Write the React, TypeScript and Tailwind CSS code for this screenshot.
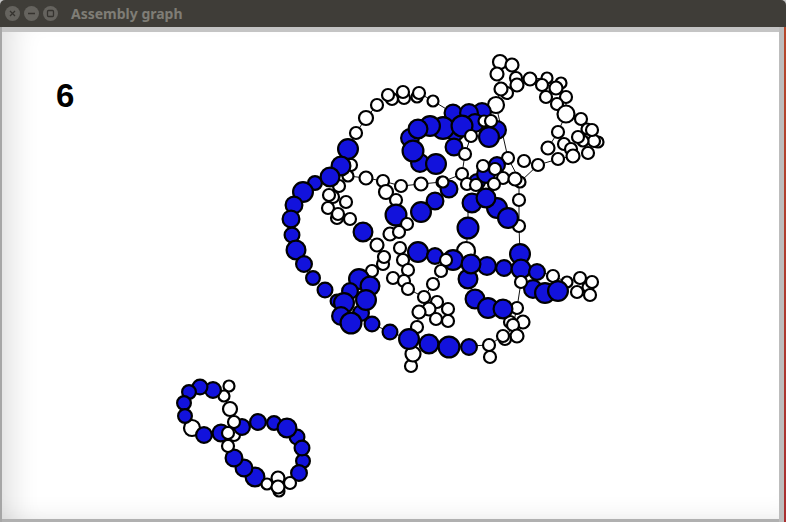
type N = [number, number, number];

const under: N[] = [
  [500,62,6.5],[512,65,6],[497,74,6],[516,78,5.5],[517,85,6],[530,79,6],[547,78,5],[542,85,5.5],[561,83,5],[556,88,6],
  [507,93,5.5],[501,89,6],[546,97,5.5],[566,97,5.5],[557,104,5.5],[496,105,7.5],[566,114,8],[581,119,5.5],[558,132,5.5],
  [598,142,5],[594,141,5.5],[587,129,5],[592,130,5.5],[583,141,5],[578,137,5.5],[564,144,5.5],[571,149,5.5],[573,156,6],[588,153,5.5],
  [548,148,6],[558,159,5.5],[538,165,5.5],[524,161,5.5],[508,158,5.5],[520,182,5],[519,200,5.5],[519,226,5.5],
  [392,99,5.5],[388,95,5.5],[404,98,5.5],[403,92,5.5],[417,97,5],[419,93,5.5],[433,101,5],[377,105,5.5],[366,118,6.5],[356,133,5.5],
  [351,165,5.5],[348,176,5],[366,178,6],[383,181,5.5],[401,186,5.5],[421,184,6],[442,182,5],[386,192,6.5],[396,200,5.5],[339,186,5.5],
  [333,197,5.5],[329,195,5.5],[346,202,5.5],[328,208,5.5],[337,218,5.5],[338,214,5.5],[350,219,5.5],
  [390,234,6],[377,245,6],[400,248,5.5],[383,264,5.5],[384,257,5.5],[403,260,5.5],[408,270,5.5],[372,271,5.5],[393,278,5.5],[404,281,5.5],
  [408,289,5.5],[433,284,5.5],[441,271,5.5],[424,297,5.5],[437,302,5.5],[429,309,6],[419,312,6],[436,319,5.5],[448,309,5.5],[448,321,5.5],
  [417,327,5.5],[411,366,5.5],[413,354,7],[466,251,8.5],[553,276,5.5],[567,282,5],[580,278,5.5],[588,287,5],[592,282,5.5],[577,292,5.5],[590,295,5.5],
  [517,308,5.5],[510,322,5.5],[523,322,6],[513,325,5.5],[517,336,6],[505,339,5.5],[503,336,5.5],[489,345,5.5],[490,357,5.5],
  [229,386,5],[224,396,5],[230,409,6.5],[192,428,7.5],[234,435,5.5],
];

const blue: N[] = [
  [348,149,9],[341,166,8.5],[315,183,6],[330,177,8.5],[303,192,9],[294,205,7.5],[291,219,7.5],[292,235,6.5],[296,250,8.5],[304,264,7],[313,278,6],[325,290,6.5],
  [363,232,8.5],[482,112,8],[453,113,7.5],[469,113,8],[475,123,8],[455,132,8],[443,128,10],[462,126,9.5],[497,130,8],[489,137,9],[454,147,7.5],
  [410,138,8],[430,126,9],[418,129,8.5],[420,163,8],[413,151,9.5],[436,164,9],[396,215,9.5],[435,201,7.5],[421,212,9],[449,189,7.5],
  [497,165,7],[477,182,7],[486,174,8],[472,203,8.5],[497,208,9],[486,198,8.5],[508,218,9],[468,228,9.5],
  [418,252,9],[435,256,7],[453,260,9],[468,279,8.5],[487,266,8],[471,264,8.5],[504,268,7],[520,254,9],[521,269,8.5],[537,272,7],
  [533,289,8],[545,293,9],[558,291,9],[475,299,8.5],[488,308,9],[503,309,8.5],
  [359,279,9],[370,286,8.5],[350,291,7],[337,301,5.5],[361,313,7],[344,303,9],[366,300,9],[341,316,8],[351,323,9.5],[372,324,6.5],[390,332,6.5],[409,339,9],[429,344,8.5],[449,347,9.5],[469,347,7],
  [213,390,7],[200,387,6.5],[189,392,6],[184,403,6],[185,416,6],[204,435,7],[221,433,7.5],[242,427,7],[258,422,7],[274,423,6],[297,437,6.5],[287,428,8.5],[303,461,6],[302,448,6.5],[299,473,7],[255,477,8.5],[244,468,7.5],[234,458,7.5],
];

const over: N[] = [
  [484,121,5],[491,121,5.5],[471,136,5.5],[465,154,5.5],[483,166,5.5],[495,169,5.5],[462,174,5.5],[503,178,5.5],[515,179,6],[443,182,5],
  [467,184,5.5],[476,185,5.5],[494,184,5.5],[407,224,5.5],[399,232,5.5],[446,260,5.5],[521,282,5.5],
  [234,422,5.5],[228,433,5.5],[228,446,5.5],[290,483,5.5],[267,484,5],[279,491,5],[278,478,6],[278,487,6],
];

const edges: number[][] = [
  [496,105,508,158],[508,158,519,179],[538,165,520,182],[524,161,538,165],[538,165,558,159],[558,159,573,156],[519,182,519,226],[519,226,520,254],[521,282,517,308],
  [548,148,558,132],[558,132,566,114],[566,114,566,97],[566,114,581,119],[581,119,592,130],[501,89,496,105],[497,74,501,89],[512,65,516,78],[530,79,517,85],[530,79,547,78],
  [392,99,404,98],[404,98,417,97],[419,93,433,101],[433,101,453,113],[377,105,366,118],[366,118,356,133],[356,133,348,149],[348,176,366,178],[366,178,383,181],[383,181,401,186],[401,186,421,184],[421,184,442,182],
  [450,347,489,345],[489,345,503,336],[409,339,417,327],[417,327,419,312],[372,324,390,332],[390,332,409,339],[424,297,408,289],[408,289,393,278],[384,257,377,245],[377,245,363,232],[400,248,403,260],[403,260,408,270],
  [465,154,462,174],[471,136,465,154],[468,228,466,251],[468,203,468,228],[445,270,433,284],[433,284,424,297],[442,182,462,174],[513,325,505,339],[517,308,513,325],[541,272,553,276],[553,276,567,282],[567,282,580,278],
];

function Dots({ list, fill, grow }: { list: N[]; fill: string; grow: number }) {
  return (
    <>
      {list.map(([x, y, r], i) => (
        <circle key={i} cx={x} cy={y} r={r + grow} fill={fill} stroke="#000" strokeWidth={2.2} />
      ))}
    </>
  );
}

function WinButton({ children }: { children: React.ReactNode }) {
  return (
    <div className="flex h-[15px] w-[15px] items-center justify-center rounded-full bg-[#65635e]">
      {children}
    </div>
  );
}

export default function App() {
  return (
    <div className="flex h-[522px] w-[786px] flex-col overflow-hidden bg-[#c4c4c4]">
      <div className="flex h-[27px] shrink-0 items-center rounded-t-[5px] bg-[#3f3d38] pl-[5px]">
        <div className="flex gap-[4px]">
          <WinButton>
            <svg width="9" height="9" viewBox="0 0 9 9" stroke="#35332f" strokeWidth="1.3">
              <path d="M2 2l5 5M7 2l-5 5" />
            </svg>
          </WinButton>
          <WinButton>
            <svg width="9" height="9" viewBox="0 0 9 9" stroke="#35332f" strokeWidth="1.5">
              <path d="M1 4.5h7" />
            </svg>
          </WinButton>
          <WinButton>
            <svg width="9" height="9" viewBox="0 0 9 9" fill="none" stroke="#35332f" strokeWidth="1.3">
              <rect x="1.5" y="1.5" width="6" height="6" rx="1" />
            </svg>
          </WinButton>
        </div>
        <span className="ml-[13px] font-['Noto_Sans',sans-serif] text-[14px] font-bold text-[#7f7d76]">
          Assembly graph
        </span>
      </div>
      <div className="flex min-h-0 flex-1">
        <div className="w-[2px] shrink-0 bg-[#a6a6a6]" />
        <div className="flex min-w-0 flex-1 flex-col">
          <div className="h-[5px] shrink-0 bg-[#c4c4c4]" />
          <div className="relative min-h-0 flex-1 bg-white shadow-[inset_30px_0_30px_-22px_rgba(0,0,0,0.14),inset_0_-22px_24px_-20px_rgba(0,0,0,0.08)]">
            <span className="absolute left-[54px] top-[46px] font-['Liberation_Sans',sans-serif] text-[33px] font-bold leading-[36px] text-black">
              6
            </span>
            <svg className="block h-full w-full" viewBox="2 32 777 487">
              {edges.map((e, i) => (
                <line key={i} x1={e[0]} y1={e[1]} x2={e[2]} y2={e[3]} stroke="#111" strokeWidth={1} />
              ))}
              <Dots list={under} fill="#fff" grow={0.5} />
              <Dots list={blue} fill="#1212dc" grow={0.9} />
              <Dots list={over} fill="#fff" grow={0.5} />
            </svg>
          </div>
          <div className="h-[3px] shrink-0 bg-[#b0b0b0]" />
        </div>
        <div className="w-[5px] shrink-0 bg-[#bdbdbd]" />
        <div className="w-[2px] shrink-0 bg-gradient-to-b from-[#b5482c] to-[#a82f30]" />
      </div>
    </div>
  );
}
